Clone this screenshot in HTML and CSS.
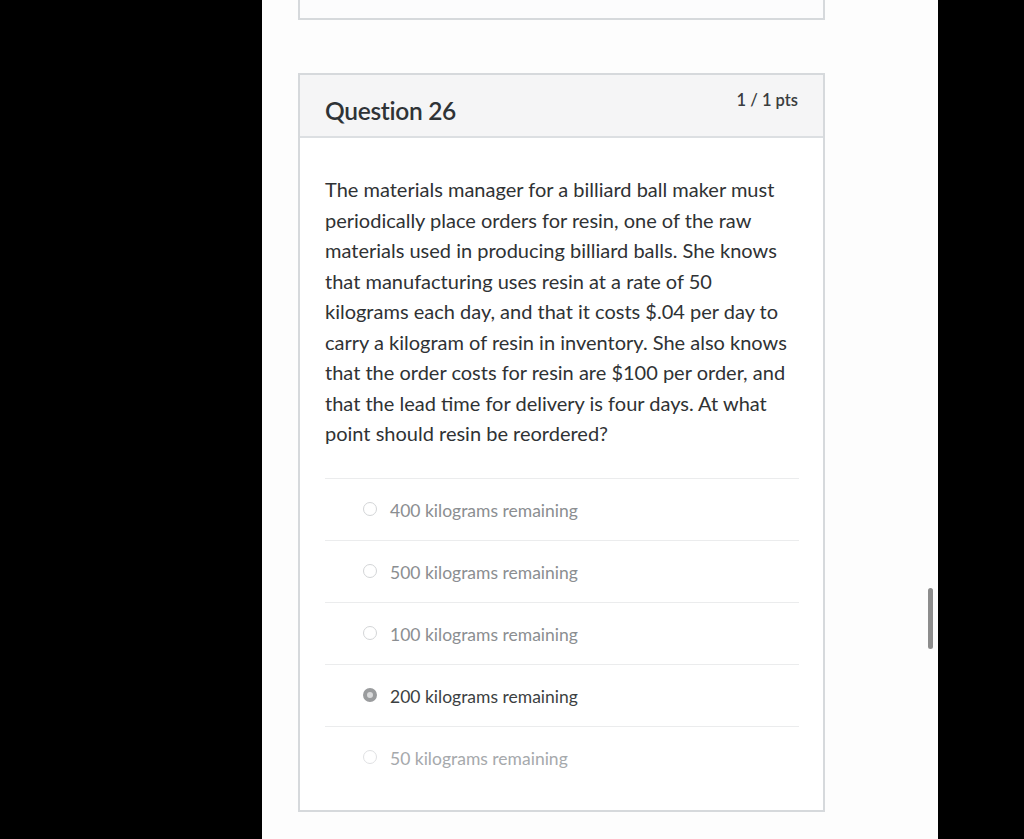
FILE: index.html
```html
<!DOCTYPE html>
<html lang="en">
<head>
<meta charset="utf-8">
<title>Question 26</title>
<link rel="stylesheet" href="styles.css">
</head>
<body>
<div class="screen">
  <div class="side side-left"></div>
  <main class="page">
    <div class="prev-card"></div>
    <section class="question">
      <header class="q-header">
        <h3 class="q-title">Question 26</h3>
        <span class="q-pts">1 / 1 pts</span>
      </header>
      <div class="q-body">
        <p class="q-text">The materials manager for a billiard ball maker must periodically place orders for resin, one of the raw materials used in producing billiard balls. She knows that manufacturing uses resin at a rate of 50 kilograms each day, and that it costs $.04 per day to carry a kilogram of resin in inventory. She also knows that the order costs for resin are $100 per order, and that the lead time for delivery is four days. At what point should resin be reordered?</p>
        <div class="answers">
          <div class="answer"><span class="radio"></span><span class="a-text">400 kilograms remaining</span></div>
          <div class="answer"><span class="radio"></span><span class="a-text">500 kilograms remaining</span></div>
          <div class="answer"><span class="radio"></span><span class="a-text">100 kilograms remaining</span></div>
          <div class="answer selected"><span class="radio"></span><span class="a-text">200 kilograms remaining</span></div>
          <div class="answer faint"><span class="radio"></span><span class="a-text">50 kilograms remaining</span></div>
        </div>
      </div>
    </section>
    <div class="scrollbar"></div>
  </main>
  <div class="side side-right"></div>
</div>
</body>
</html>
```

FILE: styles.css
```css
* { box-sizing: border-box; }
html, body { margin: 0; padding: 0; background: #000; }
body { font-family: Lato, "Open Sans", "Liberation Sans", sans-serif; }

.screen {
  display: flex;
  width: 1024px;
  height: 839px;
  overflow: hidden;
}
.side { background: #000; }
.side-left { width: 262px; flex: none; }
.side-right { flex: 1; }

.page {
  position: relative;
  width: 676px;
  flex: none;
  background: #fdfdfd;
  padding-left: 36px;
}

.prev-card {
  width: 527px;
  height: 20px;
  border: 2px solid #d6d9dc;
  border-top: none;
  background: #fcfcfd;
}

.question {
  width: 527px;
  margin-top: 53px;
  border: 2px solid #d6d9dc;
  background: #fff;
}

.q-header {
  display: flex;
  justify-content: space-between;
  align-items: flex-start;
  height: 63px;
  padding: 13px 25px 0 25px;
  background: #f5f5f6;
  border-bottom: 2px solid #dcdfe2;
}
.q-title {
  margin: 8px 0 0 0;
  font-size: 24.5px;
  font-weight: 600;
  color: #2f3336;
  letter-spacing: -0.3px;
}
.q-pts {
  margin-top: 2px;
  font-size: 16.5px;
  font-weight: 600;
  color: #3a3d40;
}

.q-body {
  padding: 36px 24px 22px 25px;
}
.q-text {
  margin: 0;
  font-size: 20px;
  line-height: 30.5px;
  color: #2f3234;
}

.answers {
  margin-top: 29px;
}
.answer {
  display: flex;
  align-items: center;
  gap: 13px;
  height: 62px;
  padding-left: 38px;
  border-top: 1.5px solid #ebeced;
  font-size: 17.5px;
  color: #8b8e91;
}
.answer .a-text { padding-top: 2px; }

.radio {
  width: 14px;
  height: 14px;
  border-radius: 50%;
  border: 1.5px solid #d3d5d7;
  background: #fff;
  flex: none;
}
.answer.selected { color: #3c3f42; }
.answer.selected .radio {
  border: 4px solid #9a9c9e;
  background: #d9dadb;
}
.answer.faint { color: #a6a9ac; }
.answer.faint .radio { border-color: #e0e1e3; }

.scrollbar {
  position: absolute;
  left: 666px;
  top: 588px;
  width: 5px;
  height: 61px;
  border-radius: 3px;
  background: #8d8d8d;
}
```
